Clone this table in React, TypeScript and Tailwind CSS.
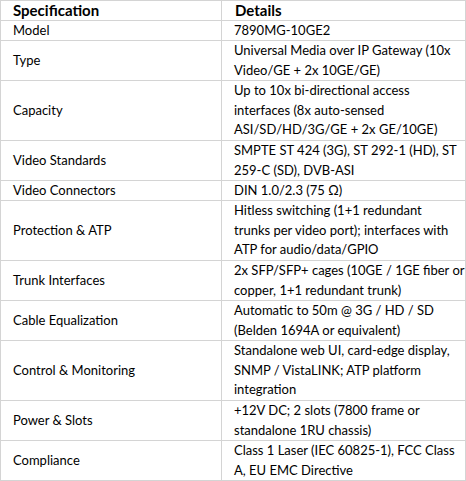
const specs: { label: string; lines: string[] }[] = [
  { label: "Model", lines: ["7890MG-10GE2"] },
  {
    label: "Type",
    lines: ["Universal Media over IP Gateway (10x", "Video/GE + 2x 10GE/GE)"],
  },
  {
    label: "Capacity",
    lines: [
      "Up to 10x bi-directional access",
      "interfaces (8x auto-sensed",
      "ASI/SD/HD/3G/GE + 2x GE/10GE)",
    ],
  },
  {
    label: "Video Standards",
    lines: ["SMPTE ST 424 (3G), ST 292-1 (HD), ST", "259-C (SD), DVB-ASI"],
  },
  { label: "Video Connectors", lines: ["DIN 1.0/2.3 (75 Ω)"] },
  {
    label: "Protection & ATP",
    lines: [
      "Hitless switching (1+1 redundant",
      "trunks per video port); interfaces with",
      "ATP for audio/data/GPIO",
    ],
  },
  {
    label: "Trunk Interfaces",
    lines: ["2x SFP/SFP+ cages (10GE / 1GE fiber or", "copper, 1+1 redundant trunk)"],
  },
  {
    label: "Cable Equalization",
    lines: ["Automatic to 50m @ 3G / HD / SD", "(Belden 1694A or equivalent)"],
  },
  {
    label: "Control & Monitoring",
    lines: [
      "Standalone web UI, card-edge display,",
      "SNMP / VistaLINK; ATP platform",
      "integration",
    ],
  },
  {
    label: "Power & Slots",
    lines: ["+12V DC; 2 slots (7800 frame or", "standalone 1RU chassis)"],
  },
  {
    label: "Compliance",
    lines: ["Class 1 Laser (IEC 60825-1), FCC Class", "A, EU EMC Directive"],
  },
];

const heights: Record<number, string> = {
  1: "h-[20px]",
  2: "h-[40px]",
  3: "h-[60px]",
};

export default function App() {
  return (
    <div className="w-[466px] h-[481px] bg-white text-black text-[13px] font-['Lato','Open_Sans',sans-serif]">
      <div className="border-t border-l border-r border-[#d4d4d4]">
        <div className="grid grid-cols-[221px_1fr] h-[20px] border-b border-[#d4d4d4] font-bold text-[15px]">
          <div className="border-r border-[#d4d4d4] pl-[12px] leading-[19px]">
            Specification
          </div>
          <div className="pl-[13px] leading-[19px]">Details</div>
        </div>
        {specs.map((row) => (
          <div
            key={row.label}
            className={`grid grid-cols-[221px_1fr] border-b border-[#d4d4d4] ${heights[row.lines.length]}`}
          >
            <div className="border-r border-[#d4d4d4] pl-[12px] flex items-center">
              {row.label}
            </div>
            <div className="pl-[12px] flex flex-col justify-center">
              {row.lines.map((line) => (
                <div key={line} className="whitespace-nowrap leading-[19.5px]">
                  {line}
                </div>
              ))}
            </div>
          </div>
        ))}
      </div>
    </div>
  );
}
